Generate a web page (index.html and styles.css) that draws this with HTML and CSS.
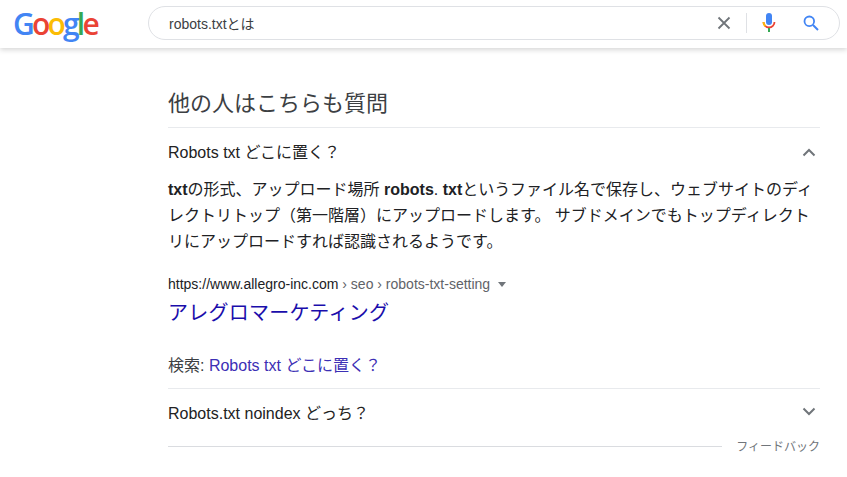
FILE: index.html

```html
<!DOCTYPE html>
<html lang="ja">
<head>
  <meta charset="UTF-8" />
  <title>robots.txtとは</title>
  <link rel="stylesheet" href="styles.css">
</head>
<body>
  <header class="topbar">
    <div class="logo"><span class="blue">G</span><span class="red">o</span><span class="yellow">o</span><span class="blue">g</span><span class="green">l</span><span class="red">e</span></div>
    <div class="searchbox">
      <span class="query">robots.txtとは</span>
      <svg class="icon-clear" width="14" height="14" viewBox="0 0 14 14"><path d="M1.500 1.500L12.500 12.500M12.500 1.500L1.500 12.500" stroke="#70757a" stroke-width="1.800" fill="none"/></svg>
      <span class="divider"></span>
      <svg class="icon-mic" width="14" height="20" viewBox="0 0 14 20">
        <rect x="4" y="0" width="6" height="12" rx="3" fill="#4285f4"/>
        <path d="M1.500 9a5.500 5.500 0 0 0 11 0" stroke="#ea4335" stroke-width="1.800" fill="none"/>
        <path d="M1.500 9a5.500 5.500 0 0 0 2 4.200" stroke="#fbbc05" stroke-width="1.800" fill="none"/>
        <rect x="6" y="15" width="2" height="4" fill="#34a853"/>
      </svg>
      <svg class="icon-search" width="16" height="16" viewBox="0 0 16 16"><circle cx="6.300" cy="6.300" r="4.800" stroke="#4285f4" stroke-width="1.800" fill="none"/><path d="M10 10L15 15" stroke="#4285f4" stroke-width="2" fill="none"/></svg>
    </div>
  </header>

  <main class="paa">
    <h2 class="paa-title">他の人はこちらも質問</h2>

    <div class="question question-open">
      <span class="question-text">Robots txt どこに置く？</span>
      <svg class="chevron" width="14" height="9" viewBox="0 0 14 9"><path d="M1.500 7.500L7 2l5.500 5.500" stroke="#70757a" stroke-width="2" fill="none"/></svg>
    </div>

    <p class="answer"><b>txt</b>の形式、アップロード場所 <b>robots</b>. <b>txt</b>というファイル名で保存し、ウェブサイトのディレクトリトップ（第一階層）にアップロードします。 サブドメインでもトップディレクトリにアップロードすれば認識されるようです。</p>

    <div class="cite">https://www.allegro-inc.com<span class="crumbs"> › seo › robots-txt-setting</span><span class="caret"></span></div>
    <a class="result-link" href="#">アレグロマーケティング</a>

    <div class="search-for">検索: <a href="#">Robots txt どこに置く？</a></div>

    <div class="question question-last">
      <span class="question-text">Robots.txt noindex どっち？</span>
      <svg class="chevron" width="14" height="9" viewBox="0 0 14 9"><path d="M1.500 1.500L7 7l5.500-5.500" stroke="#70757a" stroke-width="2" fill="none"/></svg>
    </div>

    <div class="feedback-row">
      <span class="feedback-line"></span>
      <span class="feedback">フィードバック</span>
    </div>
  </main>
</body>
</html>
```

FILE: styles.css

```css
* {
  box-sizing: border-box;
}
body {
  margin: 0;
  background: #fff;
  font-family: "Liberation Sans", "Noto Sans CJK JP", sans-serif;
  color: #202124;
}
.topbar {
  height: 48px;
  display: flex;
  align-items: flex-start;
  box-shadow: 0 2px 5px rgba(0,0,0,0.16);
}
.logo {
  width: 148px;
  padding: 4px 0 0 13px;
  font-family: "Open Sans", sans-serif;
  font-size: 30px;
  font-weight: 600;
  line-height: 40px;
  letter-spacing: -2.8px;
}
.blue { color: #4285f4; }
.red { color: #ea4335; }
.yellow { color: #fbbc05; }
.green { color: #34a853; }
.searchbox {
  width: 692px;
  height: 34px;
  margin-top: 6px;
  display: flex;
  align-items: center;
  padding: 0 20px;
  border: 1px solid #dfe1e5;
  border-radius: 17px;
}
.query {
  flex: 1;
  font-size: 14px;
  color: #3c4043;
}
.icon-clear {
  margin-right: 15px;
}
.divider {
  width: 1px;
  height: 20px;
  background: #dfe1e5;
  margin-right: 15px;
}
.icon-mic {
  margin-right: 27px;
}
.paa {
  width: 652px;
  margin-left: 168px;
}
.paa-title {
  margin: 0;
  padding-top: 41px;
  height: 79px;
  font-size: 22px;
  line-height: 30px;
  font-weight: normal;
  color: #3c4043;
}
.question {
  height: 50px;
  display: flex;
  align-items: center;
  justify-content: space-between;
  padding-right: 4px;
  border-top: 1px solid #e8eaed;
  font-size: 16px;
  color: #222;
}
.question-open .question-text {
  margin-bottom: 4px;
}
.answer {
  margin: 0;
  font-size: 16px;
  line-height: 26px;
  color: #202124;
}
.cite {
  margin-top: 19px;
  font-size: 14px;
  line-height: 20px;
  color: #202124;
  display: flex;
  align-items: center;
  white-space: pre;
}
.crumbs {
  color: #5f6368;
}
.caret {
  width: 0;
  height: 0;
  margin-left: 8px;
  border-left: 4px solid transparent;
  border-right: 4px solid transparent;
  border-top: 5px solid #70757a;
}
.result-link {
  display: block;
  margin-top: 6px;
  font-size: 20px;
  line-height: 26px;
  letter-spacing: 0.25px;
  color: #1a0dab;
  text-decoration: none;
}
.search-for {
  margin-top: 28px;
  height: 34px;
  font-size: 16px;
  line-height: 24px;
  color: #3c4043;
}
.search-for a {
  color: #3c2fb5;
  text-decoration: none;
}
.question-last {
  height: 47px;
  padding-bottom: 1px;
}
.feedback-row {
  display: flex;
  align-items: center;
  gap: 14px;
  margin-top: 2px;
}
.feedback-line {
  flex: 1;
  height: 1px;
  margin-top: 2px;
  background: #dadce0;
}
.feedback {
  font-size: 12px;
  color: #70757a;
}
```
